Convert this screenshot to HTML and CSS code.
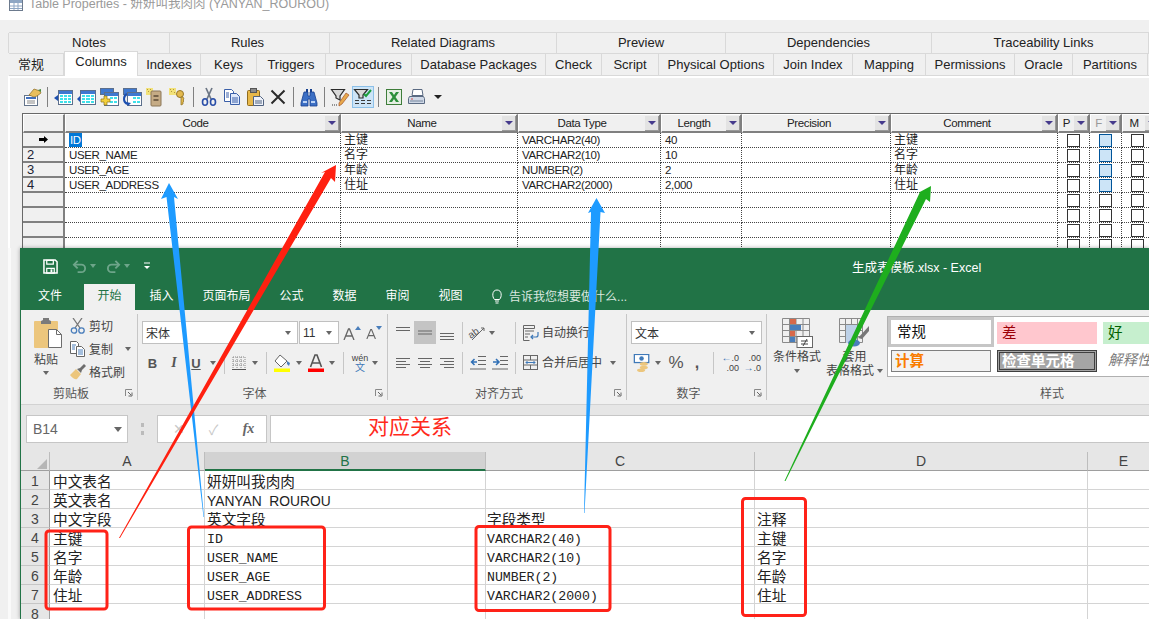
FILE: index.html
```html
<!DOCTYPE html>
<html lang="zh">
<head>
<meta charset="utf-8">
<title>Table Properties</title>
<link rel="stylesheet" href="styles.css">
</head>
<body>
<svg class="defs" width="0" height="0" aria-hidden="true">
  <symbol id="tbl" viewBox="0 0 20 20"><path d="M1 11l4-3v6z" fill="#1c4fb0"/><rect x="5.5" y="3.5" width="14" height="14" fill="#fff" stroke="#5c6f8c"/><rect x="6" y="4" width="13" height="3" fill="#3f78d0"/><path d="M7 8h3v2H7zM11 8h3v2h-3zM15 8h3v2h-3zM7 11h3v2H7zM11 11h3v2h-3zM15 11h3v2h-3zM7 14h3v2H7zM11 14h3v2h-3zM15 14h3v2h-3z" fill="#3fe0ea"/></symbol>
  <symbol id="tblbar" viewBox="0 0 20 20"><path d="M1 12l3-3v6z" fill="#1c4fb0"/><rect x="4.500" y="3.500" width="15" height="14" fill="#fff" stroke="#5c6f8c"/><rect x="5" y="4" width="14" height="3" fill="#3f78d0"/><path d="M6 8h3v2H6zM10 8h4v2h-4zM15 8h3v2h-3zM6 11h3v2H6zM10 11h4v2h-4zM15 11h3v2h-3zM6 14h3v2H6zM10 14h4v2h-4zM15 14h3v2h-3z" fill="#3fe0ea"/></symbol>
  <symbol id="tbladd" viewBox="0 0 20 20"><rect x="1.500" y="1.500" width="13" height="6" fill="#3f78d0" stroke="#5c6f8c"/><rect x="5.500" y="5.500" width="14" height="13" fill="#fff" stroke="#5c6f8c"/><rect x="6" y="6" width="13" height="3" fill="#3f78d0"/><path d="M11 10h3v2h-3zM15 10h3v2h-3zM11 14h3v2h-3zM15 14h3v2h-3z" fill="#3fe0ea"/><path d="M5 9h3v3h3v3H8v3H5v-3H2v-3h3z" fill="#f4d03c" stroke="#8c7418" stroke-width=".7"/></symbol>
  <symbol id="tblref" viewBox="0 0 20 20"><rect x="1.500" y="1.500" width="13" height="6" fill="#3f78d0" stroke="#5c6f8c"/><rect x="5.500" y="5.500" width="14" height="13" fill="#fff" stroke="#5c6f8c"/><rect x="6" y="6" width="13" height="3" fill="#3f78d0"/><path d="M11 10h3v2h-3zM15 10h3v2h-3zM11 14h3v2h-3zM15 14h3v2h-3z" fill="#3fe0ea"/><path d="M5 7C1 9 1 15 5 17" fill="none" stroke="#1c4fb0" stroke-width="2"/><path d="M4 15l5 1-3 3z" fill="#1c4fb0"/></symbol>
  <symbol id="docy" viewBox="0 0 20 20"><path d="M1 1h7v7H1z" fill="#f2e27a"/><path d="M2 2h1v1H2zM5 2h1v1H5zM3 4h1v1H3zM6 5h1v1H6z" fill="#b79a3c"/><rect x="6" y="4" width="10" height="15" rx="1" fill="#c5ab85" stroke="#8b7657"/><path d="M8.500 9h5M8.500 13h5" stroke="#5b4b36" stroke-width="1.500"/></symbol>
  <symbol id="key" viewBox="0 0 20 20"><path d="M1 1h7v7H1z" fill="#f2e27a"/><path d="M2 2h1v1H2zM5 2h1v1H5zM3 4h1v1H3zM6 5h1v1H6z" fill="#b79a3c"/><circle cx="12" cy="7" r="3.500" fill="#e3b94e" stroke="#96762a"/><path d="M13 10v8l2-1v-2l1-1-1-1 1-1-1-2z" fill="#e3b94e" stroke="#96762a" stroke-width=".8"/></symbol>
  <symbol id="props" viewBox="0 0 20 20"><rect x="2.500" y="8.500" width="13" height="10" fill="#fff" stroke="#64748b"/><path d="M4 11h10" stroke="#3f6fbf" stroke-width="2"/><path d="M5 14h8M5 16h8" stroke="#888"/><path d="M7 8l5-6 6 2 1 2-4 3-3 1z" fill="#e9bf5c" stroke="#8b6a22" stroke-width=".7"/><path d="M16 3l3-1v3z" fill="#4a8a3c"/></symbol>
  <symbol id="cut" viewBox="0 0 20 20"><path d="M7 1l5 11M13 1L8 12" stroke="#6d7785" stroke-width="1.700" fill="none"/><ellipse cx="6" cy="15" rx="2.500" ry="3.300" fill="none" stroke="#2a4ea8" stroke-width="1.600"/><ellipse cx="14" cy="15" rx="2.500" ry="3.300" fill="none" stroke="#2a4ea8" stroke-width="1.600"/></symbol>
  <symbol id="copy" viewBox="0 0 20 20"><path d="M2.500 2.500h7l2 2v10h-9z" fill="#fff" stroke="#3a5fa8"/><path d="M8.500 6.500h6l3 3v8h-9z" fill="#dfe9fb" stroke="#3a5fa8"/><path d="M10 11h6M10 13h6M10 15h6M4 6h3M4 8h3M4 10h3" stroke="#3a5fa8"/></symbol>
  <symbol id="paste" viewBox="0 0 20 20"><rect x="2.500" y="3.500" width="12" height="15" rx="1" fill="#e8b848" stroke="#8f6b1e"/><rect x="5.500" y="1.500" width="6" height="4" fill="#8a8a8a" stroke="#555"/><path d="M8.500 9.500h7l3 3v6h-10z" fill="#eef2fa" stroke="#50627f"/><path d="M10 14h7M10 16h7" stroke="#50627f"/></symbol>
  <symbol id="del" viewBox="0 0 20 20"><path d="M3.500 3.500l13 13M16.500 3.500l-13 13" stroke="#2b2b2b" stroke-width="2"/></symbol>
  <symbol id="find" viewBox="0 0 20 20"><rect x="7" y="2" width="2" height="4" fill="#16408f"/><rect x="11" y="2" width="2" height="4" fill="#16408f"/><path d="M5 5h4v4h2V5h4l3 11v3h-7v-7H9v7H2v-3z" fill="#3c6fc4" stroke="#16408f" stroke-width=".8"/><path d="M4 15h4M12 15h4" stroke="#bcd3f5" stroke-width="2"/></symbol>
  <symbol id="filter" viewBox="0 0 20 20"><path d="M1.500 2.500h13L10 9v4L6 11V9z" fill="#d8d8d8" stroke="#2b2b2b" stroke-width="1.200"/><path d="M16 6l3 2-7 9-3 2 0-3z" fill="#e8a94c" stroke="#a4552a" stroke-width=".7"/><path d="M2 18h1M4 18h1M6 18h1" stroke="#333"/></symbol>
  <symbol id="filter2" viewBox="0 0 20 20"><path d="M1.500 2.500h13L10 8v3H6V8z" fill="#d8d8d8" stroke="#2b2b2b" stroke-width="1.200"/><path d="M11 7l2 2 5-6" stroke="#1e9e3c" stroke-width="2" fill="none"/><path d="M2 13h4v1H2zM8 13h4v1H8zM14 13h4v1h-4zM2 16h4v1H2zM8 16h4v1H8zM14 16h4v1h-4z" fill="#3a3a3a"/></symbol>
  <symbol id="xl" viewBox="0 0 20 20"><rect x="2.500" y="2.500" width="15" height="15" fill="#e6efe4" stroke="#3e7d3a"/><path d="M5 5l3.500 5L5 15h3l2-3 2 3h3l-3.500-5L15 5h-3l-2 3-2-3z" fill="#2c8f3a"/></symbol>
  <symbol id="print" viewBox="0 0 20 20"><path d="M6 2.500h9l1 6H5z" fill="#fff" stroke="#5a6a82"/><path d="M2.500 9.500h14l1 2v5h-16v-5z" fill="#cfd8e6" stroke="#5a6a82"/><path d="M3 14h13" stroke="#77869c"/><path d="M4 12h2" stroke="#d34c4c"/></symbol>
  <symbol id="tblicon" viewBox="0 0 14 14"><rect x=".5" y="1.500" width="13" height="11" fill="#fff" stroke="#6c7a8d"/><path d="M1 2h12v3H1z" fill="#8fa7c4"/><path d="M1 8h12M1 10.500h12M5 5v7M9 5v7" stroke="#8fa7c4"/></symbol>

  <symbol id="save" viewBox="0 0 16 16"><path d="M1 1h12l2 2v12H1z" fill="none" stroke="#fff" stroke-width="1.600"/><path d="M4 1.500h7v4H4zM4 10h8v5H4z" fill="none" stroke="#fff" stroke-width="1.300"/><path d="M8 11h2v3H8z" fill="#fff"/></symbol>
  <symbol id="undo" viewBox="0 0 16 16"><path d="M3 6h7a4 4 0 0 1 0 8H6" fill="none" stroke="#6ea58a" stroke-width="2"/><path d="M6 2L2 6l4 4" fill="none" stroke="#6ea58a" stroke-width="2"/></symbol>
  <symbol id="redo" viewBox="0 0 16 16"><path d="M13 6H6a4 4 0 0 0 0 8h4" fill="none" stroke="#6ea58a" stroke-width="2"/><path d="M10 2l4 4-4 4" fill="none" stroke="#6ea58a" stroke-width="2"/></symbol>
  <symbol id="custom" viewBox="0 0 8 8"><path d="M1 1h6" stroke="#fff"/><path d="M1 4h6L4 7z" fill="#fff"/></symbol>
  <symbol id="bulb" viewBox="0 0 12 16"><path d="M3.500 10.500C1 8 .8 1 6 1s5 7 2.500 9.500z" fill="none" stroke="#fff"/><path d="M4 12h4M4.500 14h3" stroke="#fff"/></symbol>
  <symbol id="bigpaste" viewBox="0 0 28 30"><rect x="0" y="3" width="24" height="27" rx="1" fill="#ecc67d"/><path d="M7 3l2-1V0h6v2l2 1v3H7z" fill="#7b7b7b"/><path d="M14.500 11.500h8l5 5v13h-13z" fill="#fff" stroke="#6d6d6d"/><path d="M22.500 11.500v5h5" fill="none" stroke="#6d6d6d"/></symbol>
  <symbol id="xcut" viewBox="0 0 16 16"><path d="M3 0l7 10M12 0L5 10" stroke="#777" stroke-width="1.300"/><circle cx="4" cy="12.500" r="2.700" fill="none" stroke="#4a7ebb" stroke-width="1.300"/><circle cx="11.500" cy="12.500" r="2.700" fill="none" stroke="#4a7ebb" stroke-width="1.300"/></symbol>
  <symbol id="xcopy" viewBox="0 0 16 16"><path d="M.5 .5h6l2 2v10H.5z" fill="#fff" stroke="#666"/><path d="M6.500 5.500h5l3 3v7h-8z" fill="#fff" stroke="#666"/><path d="M8 9h5M8 11h5M8 13h5" stroke="#4a7ebb"/><path d="M2 4h4M2 6h3M2 8h3" stroke="#4a7ebb"/></symbol>
  <symbol id="brush" viewBox="0 0 16 16"><path d="M0 11l6-6 5 5-4 5c-3 1-5-2-7-4z" fill="#ecc67d"/><path d="M7 5l3-1 4-4 2 2-4 4-1 3z" fill="#6d6d6d"/></symbol>
  <symbol id="launch" viewBox="0 0 8 8"><path d="M.5 7V.5H7" fill="none" stroke="#888"/><path d="M3 3l3 3M7 3.500V7H3.500" fill="none" stroke="#666"/></symbol>
  <symbol id="growa" viewBox="0 0 14 14"><path d="M1 14L5.500 3h1L11 14M3 10h6" fill="none" stroke="#666" stroke-width="1.300"/></symbol>
  <symbol id="borders" viewBox="0 0 14 14"><path d="M1 1h12v12M1 1v12M5 1v12M9 1v12M1 5h12M1 9h12" fill="none" stroke="#888" stroke-dasharray="1 1"/><path d="M0 13.500h14" stroke="#555"/></symbol>
  <symbol id="fill" viewBox="0 0 18 18"><path d="M7 1l7 6-6 6-6-6z" fill="#fff" stroke="#666"/><path d="M14 7l3 2-1 3-2-2z" fill="#4a7ebb"/><rect x="1" y="14.500" width="16" height="3.500" fill="#ffff00"/></symbol>
  <symbol id="fcolor" viewBox="0 0 18 18"><path d="M3.500 13L8 1h2l4.500 12M5.500 9h7" fill="none" stroke="#555" stroke-width="1.600"/><rect x="1" y="14.500" width="16" height="3.500" fill="#f00"/></symbol>
  <symbol id="alignt" viewBox="0 0 16 16"><path d="M1 2.500h14M1 5.500h14" stroke="#666"/></symbol>
  <symbol id="alignm" viewBox="0 0 16 16"><path d="M1 6h14M1 9h14" stroke="#666"/></symbol>
  <symbol id="alignb" viewBox="0 0 16 16"><path d="M1 8.500h14M1 11.500h14M1 14.500h14" stroke="#666"/></symbol>
  <symbol id="orient" viewBox="0 0 18 18"><text x="0" y="12" class="orient-t" transform="rotate(-35 6 9)">ab</text><path d="M4 16L16 4M13 4h3v3" fill="none" stroke="#666"/></symbol>
  <symbol id="wrap" viewBox="0 0 16 16"><path d="M.5 .5h11v3H.5zM.5 3.500v12h6M2 6h9M2 9h5M2 12h3" fill="none" stroke="#666"/><path d="M15 7v3a2 2 0 0 1-2 2H8M10 10l-2 2 2 2" fill="none" stroke="#3f79b8" stroke-width="1.200"/></symbol>
  <symbol id="lft" viewBox="0 0 16 16"><path d="M1 3.500h14M1 6.500h10M1 9.500h14M1 12.500h10" stroke="#666"/></symbol>
  <symbol id="ctr" viewBox="0 0 16 16"><path d="M1 3.500h14M3 6.500h10M1 9.500h14M3 12.500h10" stroke="#666"/></symbol>
  <symbol id="rgt" viewBox="0 0 16 16"><path d="M1 3.500h14M5 6.500h10M1 9.500h14M5 12.500h10" stroke="#666"/></symbol>
  <symbol id="outdent" viewBox="0 0 16 14"><path d="M8 .5h8M8 4.500h8M8 8.500h8M0 13h16" stroke="#666"/><path d="M7 6H2M4.500 3L1.500 6l3 3" fill="none" stroke="#2f6fb5" stroke-width="1.500"/></symbol>
  <symbol id="indent" viewBox="0 0 16 14"><path d="M8 .5h8M8 4.500h8M8 8.500h8M0 13h16" stroke="#666"/><path d="M1 6h5M4 3l3 3-3 3" fill="none" stroke="#2f6fb5" stroke-width="1.500"/></symbol>
  <symbol id="merge" viewBox="0 0 16 16"><rect x=".5" y=".5" width="14" height="14" fill="none" stroke="#666"/><path d="M.5 5h14M.5 10h14M7.500 .5V5M7.500 10v5" stroke="#666"/><path d="M3 7.500h9M4.500 6L3 7.500 4.500 9M10.500 6L12 7.500 10.500 9" fill="none" stroke="#3f79b8"/></symbol>
  <symbol id="money" viewBox="0 0 18 20"><rect x=".5" y=".5" width="16" height="9" fill="#fff" stroke="#3f79b8" stroke-width="1.400"/><circle cx="8.500" cy="5" r="2.500" fill="#3f79b8"/><ellipse cx="11" cy="11" rx="4.500" ry="2" fill="#ecc67d"/><ellipse cx="11" cy="15" rx="4.500" ry="2" fill="#ecc67d"/><ellipse cx="8" cy="18" rx="4.500" ry="2" fill="#ecc67d"/></symbol>
  <symbol id="condfmt" viewBox="0 0 31 30"><path d="M.5 .5h27v24H.5zM.5 6.500h27M.5 12.500h27M.5 18.500h27M7.500 .5v24M14 .5v24M21 .5v24" fill="none" stroke="#8a8a8a"/><path d="M8 1h6v5H8z" fill="#d8694a"/><path d="M8 7h11v5H8z" fill="#4a7ebb"/><path d="M8 13h5v5H8z" fill="#d8694a"/><path d="M8 19h5v5H8z" fill="#4a7ebb"/><rect x="15" y="18.500" width="15.500" height="11" fill="#fff" stroke="#666"/><path d="M19 23h7M19 26h7M25 21l-4 7" stroke="#444"/></symbol>
  <symbol id="tblfmt" viewBox="0 0 31 30"><path d="M.5 .5h23v24H.5zM.5 6.500h23M.5 12.500h23M.5 18.500h23M6.500 .5v24M12.500 .5v24M18.500 .5v24" fill="none" stroke="#8a8a8a"/><path d="M7 7h11v18H7z" fill="#bdd1e8"/><path d="M19 20l11-12 0 5-7 8z" fill="#777"/><ellipse cx="15" cy="25" rx="6" ry="3.500" fill="#4a7ebb"/></symbol>
</svg>

<section class="pd">
  <div class="pd-title"><svg class="ti"><use href="#tblicon"/></svg><span>Table Properties - 妍妍叫我肉肉 (YANYAN_ROUROU)</span></div>
  <div class="dlg">
    <div class="tabs1">
      <div>Notes</div><div>Rules</div><div>Related Diagrams</div><div>Preview</div><div>Dependencies</div><div>Traceability Links</div>
    </div>
    <div class="tabs2">
      <div>常规</div><div class="on">Columns</div><div>Indexes</div><div>Keys</div><div>Triggers</div><div>Procedures</div><div>Database Packages</div><div>Check</div><div>Script</div><div>Physical Options</div><div>Join Index</div><div>Mapping</div><div>Permissions</div><div>Oracle</div><div>Partitions</div>
    </div>
    <div class="panel">
      <div class="tb">
        <svg><use href="#props"/></svg><i class="tsep"></i>
        <svg><use href="#tbl"/></svg><svg><use href="#tblbar"/></svg><svg><use href="#tbladd"/></svg><svg><use href="#tblref"/></svg><svg><use href="#docy"/></svg><svg><use href="#key"/></svg><i class="tsep"></i>
        <svg><use href="#cut"/></svg><svg><use href="#copy"/></svg><svg><use href="#paste"/></svg><svg><use href="#del"/></svg><i class="tsep"></i>
        <svg><use href="#find"/></svg><i class="tsep"></i>
        <svg><use href="#filter"/></svg><svg class="hot"><use href="#filter2"/></svg><i class="tsep"></i>
        <svg><use href="#xl"/></svg><svg><use href="#print"/></svg><b class="tb-arrow"></b>
      </div>
      <div class="grid">
        <div class="hc"></div>
        <div class="hc"><span>Code</span><i class="fb"></i></div>
        <div class="hc"><span>Name</span><i class="fb"></i></div>
        <div class="hc"><span>Data Type</span><i class="fb"></i></div>
        <div class="hc"><span>Length</span><i class="fb"></i></div>
        <div class="hc"><span>Precision</span><i class="fb"></i></div>
        <div class="hc"><span>Comment</span><i class="fb"></i></div>
        <div class="hc"><span>P</span><i class="fb"></i></div>
        <div class="hc dim"><span>F</span><i class="fb"></i></div>
        <div class="hc"><span>M</span><i class="fb"></i></div>

        <div class="rh cur"><svg class="rowarrow" viewBox="0 0 9 7"><path d="M0 2h5V0l4 3.500L5 7V5H0z"/></svg></div><div class="c"><mark>ID</mark></div><div class="c cjk">主键</div><div class="c">VARCHAR2(40)</div><div class="c">40</div><div class="c"></div><div class="c cjk">主键</div><div class="c k"><u></u></div><div class="c k"><u class="blue"></u></div><div class="c k"><u></u></div>
        <div class="rh">2</div><div class="c">USER_NAME</div><div class="c cjk">名字</div><div class="c">VARCHAR2(10)</div><div class="c">10</div><div class="c"></div><div class="c cjk">名字</div><div class="c k"><u></u></div><div class="c k"><u class="blue"></u></div><div class="c k"><u></u></div>
        <div class="rh">3</div><div class="c">USER_AGE</div><div class="c cjk">年龄</div><div class="c">NUMBER(2)</div><div class="c">2</div><div class="c"></div><div class="c cjk">年龄</div><div class="c k"><u></u></div><div class="c k"><u class="blue"></u></div><div class="c k"><u></u></div>
        <div class="rh">4</div><div class="c">USER_ADDRESS</div><div class="c cjk">住址</div><div class="c">VARCHAR2(2000)</div><div class="c">2,000</div><div class="c"></div><div class="c cjk">住址</div><div class="c k"><u></u></div><div class="c k"><u class="blue"></u></div><div class="c k"><u></u></div>
        <div class="rh"></div><div class="c"></div><div class="c"></div><div class="c"></div><div class="c"></div><div class="c"></div><div class="c"></div><div class="c k"><u></u></div><div class="c k"><u></u></div><div class="c k"><u></u></div>
        <div class="rh"></div><div class="c"></div><div class="c"></div><div class="c"></div><div class="c"></div><div class="c"></div><div class="c"></div><div class="c k"><u></u></div><div class="c k"><u></u></div><div class="c k"><u></u></div>
        <div class="rh"></div><div class="c"></div><div class="c"></div><div class="c"></div><div class="c"></div><div class="c"></div><div class="c"></div><div class="c k"><u></u></div><div class="c k"><u></u></div><div class="c k"><u></u></div>
        <div class="rh"></div><div class="c"></div><div class="c"></div><div class="c"></div><div class="c"></div><div class="c"></div><div class="c"></div><div class="c k"><u></u></div><div class="c k"><u></u></div><div class="c k"><u></u></div>
      </div>
    </div>
  </div>
</section>

<section class="xl">
  <div class="xl-title">
    <div class="qat">
      <svg class="q-save"><use href="#save"/></svg>
      <svg class="q-u"><use href="#undo"/></svg><b class="tri dimtri"></b>
      <svg class="q-u"><use href="#redo"/></svg><b class="tri dimtri"></b>
      <svg class="q-c"><use href="#custom"/></svg>
    </div>
    <div class="docname">生成表模板.xlsx - Excel</div>
  </div>
  <div class="xl-tabs">
    <div>文件</div><div class="on">开始</div><div>插入</div><div>页面布局</div><div>公式</div><div>数据</div><div>审阅</div><div>视图</div>
    <div class="tell"><svg><use href="#bulb"/></svg><span>告诉我您想要做什么...</span></div>
  </div>

  <div class="ribbon">
    <div class="group g-clip">
      <div class="gbody clipb">
        <div class="pastec"><svg><use href="#bigpaste"/></svg><span>粘贴</span><b class="tri"></b></div>
        <div class="clipr">
          <div><svg><use href="#xcut"/></svg><span>剪切</span></div>
          <div><svg><use href="#xcopy"/></svg><span>复制</span><b class="tri copytri"></b></div>
          <div><svg><use href="#brush"/></svg><span>格式刷</span></div>
        </div>
      </div>
      <div class="glabel"><i></i><span>剪贴板</span><svg><use href="#launch"/></svg></div>
    </div>

    <div class="group g-font">
      <div class="gbody pad">
        <div class="rw1">
          <div class="sel w156"><span class="blueish">宋体</span><b class="tri"></b></div>
          <div class="sel w40"><span class="blueish">11</span><b class="tri"></b></div>
          <span class="s w22 sml6"><svg class="s14"><use href="#growa"/></svg><b class="up"></b></span>
          <span class="s w22"><svg class="s12"><use href="#growa"/></svg><b class="dn"></b></span>
        </div>
        <div class="rw2">
          <span class="s w21 fb1">B</span><span class="s w22 fi">I</span><span class="s w22 fu">U</span><span class="s w12"><b class="tri"></b></span><span class="s w10"><i class="vs"></i></span>
          <span class="s w20"><svg class="s14"><use href="#borders"/></svg></span><span class="s w12"><b class="tri"></b></span><span class="s w10"><i class="vs"></i></span>
          <span class="s w22"><svg class="s18"><use href="#fill"/></svg></span><span class="s w12"><b class="tri"></b></span>
          <span class="s w22"><svg class="s18"><use href="#fcolor"/></svg></span><span class="s w10"><b class="tri"></b></span><span class="s w12"><i class="vs"></i></span>
          <span class="s w22 wen"><span>wén</span><span class="wenz">文</span></span><span class="s w8"><b class="tri"></b></span>
        </div>
      </div>
      <div class="glabel"><i></i><span>字体</span><svg><use href="#launch"/></svg></div>
    </div>

    <div class="group g-align">
      <div class="gbody pad">
        <div class="rw1">
          <span class="s w22"><svg class="s16"><use href="#alignt"/></svg></span><span class="s w22 pressed"><svg class="s16"><use href="#alignm"/></svg></span><span class="s w22"><svg class="s16"><use href="#alignb"/></svg></span><span class="s w8"><i class="vs"></i></span>
          <span class="s w22"><svg class="s18"><use href="#orient"/></svg></span><span class="s w8"><b class="tri"></b></span><span class="s w15"></span><span class="s w8"><i class="vs"></i></span>
          <span class="s w23"><svg class="s16"><use href="#wrap"/></svg></span><span class="rt">自动换行</span>
        </div>
        <div class="rw2">
          <span class="s w22"><svg class="s16"><use href="#lft"/></svg></span><span class="s w22"><svg class="s16"><use href="#ctr"/></svg></span><span class="s w22"><svg class="s16"><use href="#rgt"/></svg></span><span class="s w8"><i class="vs"></i></span>
          <span class="s w23"><svg class="s16"><use href="#outdent"/></svg></span><span class="s w22"><svg class="s16"><use href="#indent"/></svg></span><span class="s w8"><i class="vs"></i></span>
          <span class="s w23"><svg class="s16"><use href="#merge"/></svg></span><span class="rt">合并后居中</span><span class="s w22"><b class="tri"></b></span>
        </div>
      </div>
      <div class="glabel"><i></i><span>对齐方式</span><svg><use href="#launch"/></svg></div>
    </div>

    <div class="group g-num">
      <div class="gbody pad">
        <div class="rw1"><div class="sel w131"><span class="blueish">文本</span><b class="tri"></b></div></div>
        <div class="rw2">
          <span class="s w22"><svg class="s18"><use href="#money"/></svg></span><span class="s w10"><b class="tri"></b></span><span class="s w24 pct">%</span><span class="s w20 cma">,</span><span class="s w12"><i class="vs"></i></span>
          <span class="s w20 dec"><i><em>←</em>.0</i><i>.00</i></span><span class="s w22 dec"><i>.00</i><i><em>→</em>.0</i></span>
        </div>
      </div>
      <div class="glabel"><i></i><span>数字</span><svg><use href="#launch"/></svg></div>
    </div>

    <div class="group g-sty">
      <div class="gbody styb">
        <div class="bigbtn w50"><svg><use href="#condfmt"/></svg><span>条件格式</span><b class="tri"></b></div>
        <div class="bigbtn w65"><svg><use href="#tblfmt"/></svg><span>套用</span><span class="ln2">表格格式<b class="tri"></b></span></div>
        <div class="gallery">
          <div class="st normal">常规</div><div class="st bad">差</div><div class="st good">好</div>
          <div class="st calc">计算</div><div class="st check">检查单元格</div><div class="st expl">解释性</div>
        </div>
      </div>
      <div class="glabel sty"><span>样式</span></div>
    </div>
  </div>

  <div class="fbar">
    <div class="namebox"><span>B14</span><b class="tri"></b></div>
    <div class="dots"></div>
    <div class="fbtns"><span class="fx-x">✕</span><span class="fx-x">✓</span><span class="fx">fx</span></div>
    <div class="finput">对应关系</div>
  </div>

  <div class="sheet">
    <div class="ch corner"><b></b></div><div class="ch">A</div><div class="ch selc">B</div><div class="ch">C</div><div class="ch">D</div><div class="ch">E</div>
    <div class="rn">1</div><div class="d a">中文表名</div><div class="d">妍妍叫我肉肉</div><div class="d"></div><div class="d"></div><div class="d"></div>
    <div class="rn">2</div><div class="d a">英文表名</div><div class="d lat">YANYAN_ROUROU</div><div class="d"></div><div class="d"></div><div class="d"></div>
    <div class="rn">3</div><div class="d a">中文字段</div><div class="d">英文字段</div><div class="d cc">字段类型</div><div class="d">注释</div><div class="d"></div>
    <div class="rn">4</div><div class="d a">主键</div><div class="d m">ID</div><div class="d m cc">VARCHAR2(40)</div><div class="d">主键</div><div class="d"></div>
    <div class="rn">5</div><div class="d a">名字</div><div class="d m">USER_NAME</div><div class="d m cc">VARCHAR2(10)</div><div class="d">名字</div><div class="d"></div>
    <div class="rn">6</div><div class="d a">年龄</div><div class="d m">USER_AGE</div><div class="d m cc">NUMBER(2)</div><div class="d">年龄</div><div class="d"></div>
    <div class="rn">7</div><div class="d a">住址</div><div class="d m">USER_ADDRESS</div><div class="d m cc">VARCHAR2(2000)</div><div class="d">住址</div><div class="d"></div>
    <div class="rn">8</div><div class="d"></div><div class="d"></div><div class="d"></div><div class="d"></div><div class="d"></div>
  </div>
</section>

<svg class="marks" viewBox="0 0 1149 619" aria-hidden="true">
  <g class="boxes">
    <rect x="46" y="531" width="61" height="78" rx="3"/>
    <rect x="188.500" y="527" width="136" height="82" rx="3"/>
    <rect x="476" y="526.500" width="134" height="84" rx="3"/>
    <rect x="742.500" y="498.500" width="63" height="117" rx="3"/>
  </g>
  <polygon class="ablue" points="169,183 178,199 174,197 204,517 203.500,517 166.500,197 161,199"/>
  <polygon class="ablue" points="596.500,198 605,213 600.500,212 584.500,513 584,513 591,212 588,213"/>
  <polygon class="ared" points="336,165 335,182 331,178 120,538 119,538 325,172 321,173"/>
  <polygon class="agreen" points="931,186 930,202 926,199 785.500,481 784.500,481 920,192 916,194"/>
</svg>
</body>
</html>
```

FILE: styles.css
```css
* { box-sizing: border-box; }
html, body { margin: 0; padding: 0; }
body {
  width: 1149px; height: 619px; overflow: hidden; position: relative;
  background: linear-gradient(to right, #f0f0f0 8px, #fafafa 8px, #fafafa 11px, #f0f0f0 11px);
  font-family: "Liberation Sans", "Noto Sans CJK SC", sans-serif;
  color: #222;
}
.defs { display: block; height: 0; }
svg { display: block; }
.orient-t { font: 10px "Liberation Sans", sans-serif; fill: #555; }

/* PowerDesigner dialog */
.pd { height: 248px; overflow: hidden; }
.pd-title {
  height: 20px; padding: 0 0 8px 9px; background: #fff; display: flex; align-items: flex-end; gap: 6px;
  color: #9a9a9a; font-size: 12.5px; line-height: 15px; white-space: nowrap;
}
.ti { width: 14px; height: 14px; flex: none; }
.dlg { padding-top: 12px; background: #f0f0f0; height: 228px; }
.tabs1 {
  margin-left: 9px; height: 22px; display: grid;
  grid-template-columns: 161px 160px 227px 169px 206px 1fr;
  border-top: 1px solid #d9d9d9; border-bottom: 1px solid #d9d9d9;
}
.tabs1 div { border-right: 1px solid #d9d9d9; border-left: 1px solid #d9d9d9; margin-left: -1px; text-align: center; font-size: 13px; line-height: 20px; }
.tabs1 div:nth-child(2) { padding-right: 4px; }
.tabs1 div:nth-child(6) { padding-left: 7px; }
.tabs2 { margin-left: 9px; height: 22px; display: flex; font-size: 13px; border-bottom: 1px solid #d9d9d9; }
.tabs2 div { flex: none; text-align: center; line-height: 21px; border-right: 1px solid #d9d9d9; }
.tabs2 div:nth-child(1) { width: 55px; padding-right: 10px; }
.tabs2 div:nth-child(2) { width: 74px; }
.tabs2 div:nth-child(3) { width: 63px; }
.tabs2 div:nth-child(4) { width: 56px; }
.tabs2 div:nth-child(5) { width: 69px; }
.tabs2 div:nth-child(6) { width: 86px; }
.tabs2 div:nth-child(7) { width: 134px; }
.tabs2 div:nth-child(8) { width: 56px; }
.tabs2 div:nth-child(9) { width: 57px; }
.tabs2 div:nth-child(10) { width: 115px; }
.tabs2 div:nth-child(11) { width: 79px; }
.tabs2 div:nth-child(12) { width: 73px; }
.tabs2 div:nth-child(13) { width: 89px; }
.tabs2 div:nth-child(14) { width: 58px; }
.tabs2 div:nth-child(15) { width: 75px; }
.tabs2 .on { background: #fff; height: 25px; margin-top: -3px; border: 1px solid #d9d9d9; border-bottom: 0; line-height: 20px; }
.panel { margin-left: 8px; border-top: 2px solid #fff; border-left: 2px solid #fff; padding-left: 12px; height: 174px; }
.tb { height: 35px; padding-top: 2px; display: flex; align-items: center; margin-left: -1.5px; }
.tb svg { width: 20px; height: 20px; margin: 0 1.5px; flex: none; }
.tb svg.hot { background: #cde4f7; outline: 1px solid #8cc0e8; }
.tsep { width: 1px; height: 20px; background: #808080; margin: 0 3.5px; flex: none; }
.tb-arrow { width: 0; height: 0; border: 4px solid transparent; border-top: 4px solid #222; border-bottom: 0; margin-left: 5px; }
.grid {
  display: grid; width: 1140px;
  grid-template-columns: 42px 276px 177px 143px 81px 149px 167px 32px 32px 39px;
  grid-template-rows: 19px repeat(8, 15px);
  font-size: 11.5px; line-height: 14px; letter-spacing: -.35px;
  background: #fff; border-top: 1px solid #696969; border-left: 1px solid #696969;
}
.hc {
  background: #f0f0f0; display: flex; align-items: center; color: #222;
  border-top: 1px solid #fff; border-left: 1px solid #fff; border-right: 2px solid #808080; border-bottom: 2px solid #808080;
  min-width: 0; overflow: hidden;
}
.hc span { flex: 1; text-align: center; min-width: 0; }
.hc.dim span { color: #999; }
.fb { width: 14px; height: 15px; flex: none; background: #e3e3e3; border-right: 1px solid #999; border-bottom: 1px solid #999; display: flex; align-items: center; justify-content: center; }
.fb::after { content: ""; width: 0; height: 0; border: 4px solid transparent; border-top: 4px solid #453a8c; border-bottom: 0; }
.rh { background: #f0f0f0; border-right: 2px solid #808080; border-bottom: 2px solid #808080; padding-left: 4px; display: flex; align-items: center; font-size: 13px; letter-spacing: 0; color: #223; }
.rh.cur { justify-content: center; padding-left: 0; }
.rowarrow { width: 9px; height: 7px; }
.c { border-right: 1px dotted #444; border-bottom: 1px dotted #444; padding-left: 4px; white-space: nowrap; overflow: hidden; }
.c.cjk { font-size: 12px; line-height: 15px; padding-left: 3px; letter-spacing: 0; }
.c mark { background: #0078d7; color: #fff; display: inline-block; padding: 0 1px; }
.c.k { padding: 0 0 0 9px; display: flex; align-items: center; }
.c u { display: block; width: 13px; height: 13px; border: 1px solid #333; background: #fff; text-decoration: none; }
.c u.blue { background: #cce4f7; border-color: #005499; }

/* Excel */
.xl { height: 371px; margin-left: 20px; background: #fff; border-left: 1px solid #217346; overflow: hidden; position: relative; box-shadow: 0 0 4px rgba(0,0,0,.35); }
.xl-title { height: 36px; background: #217346; display: flex; align-items: center; color: #fff; }
.qat { display: flex; align-items: center; width: 831px; padding-left: 22px; }
.q-save { width: 15px; height: 15px; margin-right: 14px; }
.q-u { width: 15px; height: 15px; margin-right: 3px; }
.q-c { width: 8px; height: 8px; margin-left: 3px; }
.tri { display: inline-block; width: 0; height: 0; border: 3.5px solid transparent; border-top: 4px solid #666; border-bottom: 0; flex: none; }
.dimtri { border-top-color: #6ea58a; margin-right: 10px; }
.docname { font-size: 12.5px; white-space: nowrap; }
.xl-tabs { height: 26px; background: #217346; display: flex; color: #fff; font-size: 12px; line-height: 24px; padding-left: 2.500px; }
.xl-tabs > div { padding: 0 14.500px; flex: none; }
.xl-tabs .on { background: #f0f0f0; color: #217346; width: 51px; padding: 0; text-align: center; margin-left: 7.500px; }
.xl-tabs .tell { padding: 0 0 0 14px; display: flex; align-items: center; gap: 6px; color: #dbe8e0; }
.tell svg { width: 12px; height: 16px; }

.ribbon { height: 95px; background: #f0f0f0; border-bottom: 1px solid #d2d2d2; display: flex; font-size: 12px; color: #444; }
.group { flex: none; height: 86px; margin-top: 4px; border-right: 1px solid #c6c6c6; display: flex; flex-direction: column; }
.g-clip { width: 117px; }
.g-font { width: 250px; }
.g-align { width: 239px; }
.g-num { width: 140px; }
.g-sty { flex: 1 0 382px; border-right: 0; }
.gbody { height: 70px; flex: none; }
.pad { padding: 7px 0 0 4px; }
.glabel { display: grid; grid-template-columns: 1fr auto 1fr; align-items: center; height: 20px; padding-right: 4px; font-size: 12px; color: #555; }
.glabel span { margin-right: 12px; }
.glabel svg { width: 8px; height: 8px; justify-self: end; }
.glabel.sty { grid-template-columns: 1fr; width: 574px; text-align: center; }
.glabel.sty span { margin-right: 0; }

.clipb { display: flex; padding: 4px 0 0 13px; }
.pastec { width: 36px; display: flex; flex-direction: column; align-items: flex-start; }
.pastec svg { width: 28px; height: 30px; margin-bottom: 2px; flex: none; }
.pastec span { line-height: 20px; width: 24px; }
.pastec .tri { margin-left: 9px; margin-top: 1px; }
.clipr { display: flex; flex-direction: column; margin-top: -4px; }
.clipr div { height: 23px; display: flex; align-items: center; gap: 3px; }
.clipr svg { width: 16px; height: 16px; }
.copytri { margin-left: 9px; }

.rw1 { height: 23px; display: flex; align-items: center; }
.rw2 { height: 22px; margin-top: 8px; display: flex; align-items: center; }
.sel { height: 23px; background: #fff; border: 1px solid #c0c0c0; display: flex; align-items: center; justify-content: space-between; padding: 0 6px 0 3px; font-size: 12px; flex: none; }
.w156 { width: 156px; margin-right: 1px; }
.w40 { width: 40px; }
.w131 { width: 131px; }
.blueish { color: #333; }
.s { flex: none; height: 22px; display: flex; align-items: center; justify-content: center; }
.w8 { width: 8px; }
.w10 { width: 10px; }
.w12 { width: 12px; }
.w15 { width: 15px; }
.w20 { width: 20px; }
.w21 { width: 21px; }
.w22 { width: 22px; }
.w23 { width: 23px; }
.w24 { width: 24px; }
.sml6 { margin-left: 2px; }
.s14 { width: 14px; height: 14px; }
.s12 { width: 12px; height: 12px; }
.s16 { width: 16px; height: 16px; }
.s18 { width: 18px; height: 18px; }
.up, .dn { width: 0; height: 0; border: 3px solid transparent; margin-bottom: 10px; margin-left: -2px; }
.up { border-bottom: 4px solid #4a7ebb; border-top: 0; }
.dn { border-top: 4px solid #4a7ebb; border-bottom: 0; }
.vs { display: block; width: 1px; height: 22px; background: #c6c6c6; }
.fb1 { font-weight: 700; font-size: 13px; color: #555; }
.fi { font-style: italic; font-family: "Liberation Serif", serif; font-size: 14px; font-weight: 700; color: #555; }
.fu { text-decoration: underline; font-weight: 700; font-size: 13px; color: #555; }
.wen { flex-direction: column; font-size: 9px; line-height: 10px; color: #444; }
.wenz { color: #3f79b8; font-size: 10px; }
.pressed { height: 23px; background: #c4c4c4; }
.rt { flex: none; font-size: 12px; line-height: 22px; white-space: nowrap; color: #444; }
.pct { font-size: 17px; color: #555; padding-left: 2px; }
.cma { font-size: 16px; font-weight: 700; color: #555; }
.dec { flex-direction: column; font-size: 9px; line-height: 10px; color: #444; align-items: flex-end; }
.dec i { font-style: normal; display: flex; align-items: center; }
.dec em { font-style: normal; color: #2f6fb5; font-size: 10px; }
.styb { display: flex; padding-left: 5px; }
.bigbtn { flex: none; display: flex; flex-direction: column; align-items: center; padding-top: 4px; line-height: 14px; }
.w50 { width: 50px; }
.w65 { width: 65px; }
.bigbtn svg { width: 31px; height: 30px; margin-bottom: 2px; flex: none; }
.bigbtn .tri { margin-top: 5px; }
.ln2 { white-space: nowrap; display: flex; align-items: center; gap: 3px; }
.ln2 .tri { margin-top: 0; }
.gallery {
  flex: none; width: 300px; height: 61px; margin-top: 2px; background: #fff; border: 1px solid #b0b0b0; border-right: 0;
  display: grid; grid-template-columns: 106px 100px 60px; grid-template-rows: 30px 22px; column-gap: 3px; row-gap: 3px;
  font-size: 14.500px;
}
.g-sty .st { line-height: 20px; white-space: nowrap; overflow: hidden; }
.normal { border: 3px solid #c6c6c6; background: #fff; color: #111; padding: 3px 0 0 6px; }
.g-sty .st.normal { line-height: 18px; }
.bad { background: #ffc7ce; color: #9c0006; height: 22px; align-self: end; margin-bottom: 3px; padding: 1px 0 0 5px; }
.good { background: #c6efce; color: #006100; height: 22px; align-self: end; margin-bottom: 3px; padding: 1px 0 0 5px; margin-left: 3px; }
.calc { background: #f2f2f2; color: #fa7d00; font-weight: 700; border: 1px solid #7f7f7f; margin: 0 3px; padding-left: 3px; }
.check { background: #a5a5a5; color: #fff; font-weight: 700; border: 3px double #3f3f3f; padding-left: 2px; }
.g-sty .check { line-height: 16px; }
.expl { color: #7f7f7f; font-style: italic; margin-left: 3px; padding-left: 5px; }

.fbar { height: 48px; background: #e6e6e6; display: flex; align-items: flex-start; padding: 10px 0 0 5px; border-bottom: 1px solid #e6e6e6; }
.namebox { width: 102px; height: 28px; background: #fff; border: 1px solid #c6c6c6; display: flex; align-items: center; justify-content: space-between; padding: 0 5px 0 6px; font-size: 14px; color: #666; }
.namebox .tri { border-width: 4px; border-top-width: 5px; border-bottom: 0; }
.dots { width: 3px; height: 12px; margin: 8px 13px; border-left: 3px dotted #bbb; }
.fbtns { width: 110px; height: 28px; background: #fff; border: 1px solid #c6c6c6; display: flex; align-items: center; padding-left: 3px; color: #c8c8c8; flex: none; }
.fbtns span { width: 36px; text-align: center; font-size: 14px; }
.fbtns .fx { font-family: "Liberation Serif", serif; font-style: italic; font-weight: 700; color: #666; }
.finput { flex: 1; height: 28px; margin-left: 3px; background: #fff; border: 1px solid #c6c6c6; border-right: 0; color: #ff2a1c; font-size: 21px; line-height: 22px; padding-left: 97px; }

.sheet {
  display: grid; grid-template-columns: 29px 155px 281px 269px 333px 72px; grid-template-rows: 19px repeat(8, 19px);
  font-size: 14.670px; line-height: 19px; color: #222; margin-top: -1px;
}
.ch { background: #e6e6e6; border-right: 1px solid #bdbdbd; border-bottom: 1px solid #9e9e9e; text-align: center; font-size: 14px; color: #444; }
.corner { display: flex; align-items: flex-end; justify-content: flex-end; padding: 0 2px 1px 0; }
.corner b { width: 0; height: 0; border-left: 10px solid transparent; border-bottom: 10px solid #b6b6b6; }
.selc { background: #d2d2d2; border-bottom: 2px solid #217346; color: #217346; }
.rn { background: #e6e6e6; border-right: 1px solid #9e9e9e; border-bottom: 1px solid #c6c6c6; text-align: center; color: #444; font-size: 14px; padding-top: 1px; }
.d { border-right: 1px solid #d4d4d4; border-bottom: 1px solid #d4d4d4; padding: 1.500px 0 0 2px; white-space: nowrap; overflow: hidden; }
.d.a { padding-left: 3px; }
.d.lat { font-size: 13.800px; }
.d.cc { padding-left: 1px; }
.d.m { font-family: "Liberation Mono", monospace; font-size: 13.200px; padding-top: 2px; }

/* Annotations drawn on top of the screenshot */
.marks { position: absolute; left: 0; top: 0; width: 1149px; height: 619px; pointer-events: none; }
.boxes rect { fill: none; stroke: #ff2218; stroke-width: 3; }
.ablue { fill: #1e9bff; }
.ared { fill: #ff2010; }
.agreen { fill: #1eae1e; }
```
